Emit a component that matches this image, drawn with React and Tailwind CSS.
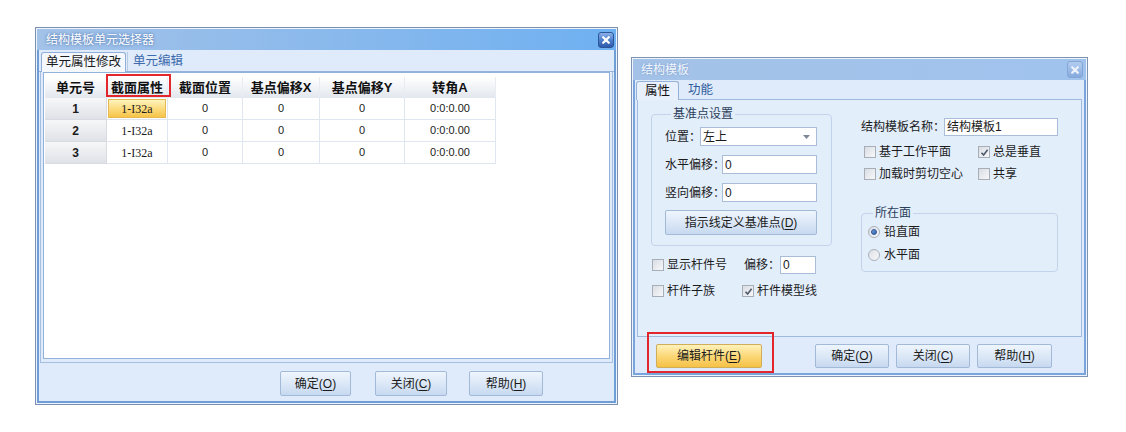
import React from "react";

function CloseBtn({ active }) {
  return (
    <div
      className={
        active
          ? "w-[16px] h-[16px] rounded-[3px] border border-[#2b5699] bg-gradient-to-b from-[#8bb0ea] via-[#4f7fcc] to-[#2d5aa9] flex items-center justify-center"
          : "w-[16px] h-[17px] rounded-[3px] border border-[#86a6d4] bg-gradient-to-b from-[#b3cdf0] to-[#86aade] flex items-center justify-center"
      }
    >
      <svg width="8" height="8" viewBox="0 0 8 8">
        <path
          d="M1.2 1.2L6.8 6.8M6.8 1.2L1.2 6.8"
          stroke={active ? "#ffffff" : "#eef3fb"}
          strokeWidth="2.2"
          strokeLinecap="round"
        />
      </svg>
    </div>
  );
}

function Btn({ children, w, className = "" }) {
  return (
    <div
      style={{ width: w }}
      className={`h-[25px] flex items-center justify-center border border-[#a2b9d7] rounded-[2px] bg-gradient-to-b from-[#eef5fd] via-[#dce8f7] to-[#c7d9f0] text-[12px] text-[#1b1b1b] shrink-0 ${className}`}
    >
      {children}
    </div>
  );
}

function U({ children }) {
  return <span className="underline underline-offset-2">{children}</span>;
}

function Check({ checked }) {
  return (
    <span className="w-[12px] h-[12px] shrink-0 border border-[#a7aeb8] bg-gradient-to-br from-[#d9dde3] to-[#f7f8fa] flex items-center justify-center">
      {checked && (
        <svg width="9" height="9" viewBox="0 0 9 9">
          <path d="M1.5 4.8L3.6 7L7.6 1.8" fill="none" stroke="#4f5a6b" strokeWidth="1.6" />
        </svg>
      )}
    </span>
  );
}

function Radio({ checked }) {
  return (
    <span className="w-[12px] h-[12px] shrink-0 rounded-full border border-[#a9b0ba] bg-gradient-to-br from-[#dcdfe4] to-[#f8f9fb] flex items-center justify-center">
      {checked && <span className="w-[6px] h-[6px] rounded-full bg-gradient-to-br from-[#7aa3da] to-[#2f5fa8] border border-[#2c5496]" />}
    </span>
  );
}

const headers = ["单元号", "截面属性", "截面位置", "基点偏移X", "基点偏移Y", "转角A"];

function LeftWindow() {
  return (
    <div className="w-[583px] h-[378px] shrink-0 border border-[#7a90ae] bg-[#eef4fc] p-px flex flex-col">
      <div className="h-[21px] shrink-0 bg-gradient-to-r from-[#a3c2e8] via-[#8ab9ec] to-[#6eb0f1] flex items-center justify-between pl-[9px] pr-[2px]">
        <span className="text-[12px] text-white [text-shadow:0_0_3px_rgba(45,85,150,0.9)] leading-none">结构模板单元选择器</span>
        <CloseBtn active />
      </div>
      <div className="flex-1 flex flex-col bg-[#dfeafa] border-2 border-t-0 border-[#6f9dd6]">
        <div className="h-[22px] shrink-0 flex items-end pl-[2px] border-b border-[#95b3da]">
          <div className="h-[20px] -mb-px px-[4px] flex items-center bg-[#f4f8fd] border border-b-0 border-[#8fafd9] rounded-t-[3px] text-[12.5px] text-[#1b1b1b]">
            单元属性修改
          </div>
          <div className="h-[19px] px-[5px] flex items-center text-[12.5px] text-[#3d6bad] border-l border-[#b8cbe4] ml-[1px]">
            单元编辑
          </div>
        </div>
        <div className="flex-1 flex flex-col mx-px px-[2px] pb-[3px] border-x border-b border-[#a5bfe0]">
          <div className="flex-1 bg-white border border-[#93b2da] pt-[4px] pl-px">
            <div className="grid grid-cols-[62px_61px_75px_77px_85px_91px] w-max">
              {headers.map((h, i) => (
                <div
                  key={h}
                  className="relative h-[21px] flex items-center justify-center font-bold text-[13px] text-[#111] bg-gradient-to-b from-[#ffffff] to-[#e2e7ee] border-r border-[#e9edf3]"
                >
                  {h}
                  {i === 1 && (
                    <span className="absolute z-10 -left-px -top-[3px] w-[65px] h-[23px] border-2 border-[#e3262b]" />
                  )}
                </div>
              ))}
              {[1, 2, 3].map((n) => (
                <React.Fragment key={n}>
                  <div className="h-[22px] flex items-center justify-center font-bold text-[12px] bg-gradient-to-b from-[#f7f7f8] to-[#dfe2e7] border-r border-b border-[#d8dce2]">
                    {n}
                  </div>
                  <div className="h-[22px] flex items-center justify-center border-r border-b border-[#dfe6ef] p-px">
                    {n === 1 ? (
                      <div className="w-full h-full flex items-center justify-center bg-gradient-to-b from-[#fff3bd] via-[#fcdc7e] to-[#f6c447] border border-[#e6b955] font-['Liberation_Serif',serif] text-[12px]">
                        1-I32a
                      </div>
                    ) : (
                      <span className="font-['Liberation_Serif',serif] text-[12px]">1-I32a</span>
                    )}
                  </div>
                  <div className="h-[22px] flex items-center justify-center border-r border-b border-[#dfe6ef] text-[11px]">0</div>
                  <div className="h-[22px] flex items-center justify-center border-r border-b border-[#dfe6ef] text-[11px]">0</div>
                  <div className="h-[22px] flex items-center justify-center border-r border-b border-[#dfe6ef] text-[11px]">0</div>
                  <div className="h-[22px] flex items-center justify-center border-r border-b border-[#dfe6ef] text-[11px]">0:0:0.00</div>
                </React.Fragment>
              ))}
            </div>
          </div>
        </div>
        <div className="h-[38px] shrink-0 flex items-start pt-[8px] pl-[241px]">
          <Btn w="71px">确定(<U>O</U>)</Btn>
          <Btn w="72px" className="ml-[24px]">关闭(<U>C</U>)</Btn>
          <Btn w="74px" className="ml-[22px]">帮助(<U>H</U>)</Btn>
        </div>
      </div>
    </div>
  );
}

function Input({ w, children }) {
  return (
    <div style={{ width: w }} className="h-[19px] bg-white border border-[#a9bdd8] flex items-center pl-[2px] text-[12px] shrink-0">
      {children}
    </div>
  );
}

function RightWindow() {
  return (
    <div className="w-[457px] h-[320px] shrink-0 mt-[30px] border border-[#7c93b2] bg-[#eef4fc] p-px flex flex-col">
      <div className="h-[21px] shrink-0 bg-gradient-to-r from-[#a4c2e7] to-[#a0c3ee] flex items-center justify-between pl-[8px] pr-[3px]">
        <span className="text-[12px] text-[#f3f7fd] [text-shadow:0_0_2px_rgba(90,130,190,0.7)] leading-none">结构模板</span>
        <CloseBtn />
      </div>
      <div className="flex-1 flex flex-col bg-[#dfeafa] border-2 border-t-0 border-[#7aa5dc]">
        <div className="h-[19px] shrink-0 flex items-end pl-px">
          <div className="h-[19px] -mb-px px-[8px] flex items-center bg-[#e8f0fb] border border-b-0 border-[#93b1d9] rounded-t-[3px] text-[12.5px] text-[#111] relative z-10">
            属性
          </div>
          <div className="h-[18px] px-[9px] flex items-center text-[12.5px] text-[#2f5d9e]">功能</div>
        </div>
        <div className="h-[238px] shrink-0 mx-[2px] border border-[#9fbade] bg-[#e3eefb] flex pl-[13px] text-[12px] text-[#1b1b1b]">
          <div className="w-[181px] shrink-0 flex flex-col pt-[7px]">
            <fieldset className="border border-[#c3d3e9] rounded-[4px] pl-[13px] pb-[10px] flex flex-col">
              <legend className="ml-[6px] px-[2px] leading-[14px] text-[#2b3e5c]">基准点设置</legend>
              <div className="flex items-center mt-[6px]">
                <span className="w-[35px] shrink-0 whitespace-nowrap">位置：</span>
                <div className="w-[117px] shrink-0 h-[19px] bg-white border border-[#a9bdd8] flex items-center justify-between pl-[2px] pr-[6px]">
                  <span>左上</span>
                  <svg width="7" height="4" viewBox="0 0 7 4"><path d="M0 0H7L3.5 4Z" fill="#7d8797" /></svg>
                </div>
              </div>
              <div className="flex items-center mt-[9px]">
                <span className="w-[57px] shrink-0 whitespace-nowrap">水平偏移：</span>
                <Input w="95px">0</Input>
              </div>
              <div className="flex items-center mt-[9px]">
                <span className="w-[57px] shrink-0 whitespace-nowrap">竖向偏移：</span>
                <Input w="95px">0</Input>
              </div>
              <Btn w="152px" className="mt-[8px]">指示线定义基准点(<U>D</U>)</Btn>
            </fieldset>
            <div className="flex items-center mt-[10px] h-[18px] pl-px">
              <Check />
              <span className="ml-[3px] w-[77px] shrink-0">显示杆件号</span>
              <span className="w-[36px] shrink-0 whitespace-nowrap">偏移：</span>
              <div className="w-[36px] h-[18px] bg-white border border-[#a9bdd8] flex items-center pl-[2px]">0</div>
            </div>
            <div className="flex items-center mt-[8px] h-[18px] pl-px">
              <Check />
              <span className="ml-[3px] w-[75px] shrink-0">杆件子族</span>
              <Check checked />
              <span className="ml-[3px]">杆件模型线</span>
            </div>
          </div>
          <div className="w-[197px] shrink-0 ml-[29px] flex flex-col pt-[18px]">
            <div className="flex items-center">
              <span className="w-[83px] shrink-0 whitespace-nowrap">结构模板名称：</span>
              <div className="w-[114px] h-[18px] bg-white border border-[#a9bdd8] flex items-center pl-[2px]">结构模板1</div>
            </div>
            <div className="flex items-center mt-[9px] h-[14px] pl-[3px]">
              <Check />
              <span className="ml-[3px] w-[99px] shrink-0">基于工作平面</span>
              <Check checked />
              <span className="ml-[3px]">总是垂直</span>
            </div>
            <div className="flex items-center mt-[8px] h-[14px] pl-[3px]">
              <Check />
              <span className="ml-[3px] w-[99px] shrink-0 whitespace-nowrap">加载时剪切空心</span>
              <Check />
              <span className="ml-[3px]">共享</span>
            </div>
            <fieldset className="mt-[25px] border border-[#c3d3e9] rounded-[4px] pl-[6px] pb-[9px] flex flex-col">
              <legend className="ml-[5px] px-[2px] leading-[14px] text-[#2b3e5c]">所在面</legend>
              <div className="flex items-center mt-[5px] h-[14px]">
                <Radio checked />
                <span className="ml-[4px]">铅直面</span>
              </div>
              <div className="flex items-center mt-[9px] h-[14px]">
                <Radio />
                <span className="ml-[4px]">水平面</span>
              </div>
            </fieldset>
          </div>
        </div>
        <div className="flex-1 flex items-start pt-[7px] pl-[21px]">
          <div className="relative">
            <div className="w-[106px] h-[24px] flex items-center justify-center border border-[#d2ad58] rounded-[2px] bg-gradient-to-b from-[#fff2bb] via-[#fcd877] to-[#f6c145] text-[12px] text-[#1b1b1b]">
              编辑杆件(<U>E</U>)
            </div>
            <span className="absolute -left-[9px] -top-[12px] w-[127px] h-[41px] border-2 border-[#e3262b]" />
          </div>
          <Btn w="74px" className="ml-[53px] !h-[24px]">确定(<U>O</U>)</Btn>
          <Btn w="74px" className="ml-[7px] !h-[24px]">关闭(<U>C</U>)</Btn>
          <Btn w="75px" className="ml-[7px] !h-[24px]">帮助(<U>H</U>)</Btn>
        </div>
      </div>
    </div>
  );
}

export default function App() {
  return (
    <div className="w-[1126px] h-[432px] bg-white flex items-start pl-[35px] pt-[27px] gap-[13px] font-['Liberation_Sans','Noto_Sans_CJK_SC',sans-serif] text-[#1b1b1b] overflow-hidden">
      <LeftWindow />
      <RightWindow />
    </div>
  );
}
